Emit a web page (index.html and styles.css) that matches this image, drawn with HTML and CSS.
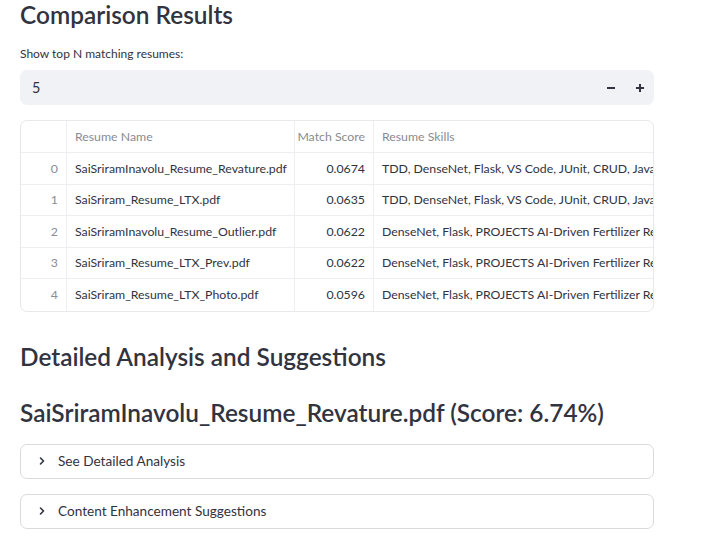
FILE: index.html
```html
<!DOCTYPE html>
<html lang="en">
<head>
<meta charset="utf-8">
<title>Comparison Results</title>
<link rel="stylesheet" href="styles.css">
</head>
<body>
<main class="main">
  <h3 class="heading">Comparison Results</h3>
  <div class="label">Show top N matching resumes:</div>
  <div class="number-input">
    <span class="value">5</span>
    <div class="steppers">
      <button class="step" aria-label="decrement"><svg width="10" height="10" viewBox="0 0 10 10"><rect x="1" y="4" width="8" height="2" fill="#31333f"/></svg></button>
      <button class="step" aria-label="increment"><svg width="10" height="10" viewBox="0 0 10 10"><rect x="1" y="4" width="8" height="2" fill="#31333f"/><rect x="4" y="1" width="2" height="8" fill="#31333f"/></svg></button>
    </div>
  </div>

  <div class="table">
    <div class="row head">
      <div class="cell idx"></div>
      <div class="cell name">Resume Name</div>
      <div class="cell score">Match Score</div>
      <div class="cell skills">Resume Skills</div>
    </div>
    <div class="row">
      <div class="cell idx">0</div>
      <div class="cell name">SaiSriramInavolu_Resume_Revature.pdf</div>
      <div class="cell score">0.0674</div>
      <div class="cell skills">TDD, DenseNet, Flask, VS Code, JUnit, CRUD, Javalin, Python</div>
    </div>
    <div class="row">
      <div class="cell idx">1</div>
      <div class="cell name">SaiSriram_Resume_LTX.pdf</div>
      <div class="cell score">0.0635</div>
      <div class="cell skills">TDD, DenseNet, Flask, VS Code, JUnit, CRUD, Javalin, Python</div>
    </div>
    <div class="row">
      <div class="cell idx">2</div>
      <div class="cell name">SaiSriramInavolu_Resume_Outlier.pdf</div>
      <div class="cell score">0.0622</div>
      <div class="cell skills">DenseNet, Flask, PROJECTS AI-Driven Fertilizer Recommendation</div>
    </div>
    <div class="row">
      <div class="cell idx">3</div>
      <div class="cell name">SaiSriram_Resume_LTX_Prev.pdf</div>
      <div class="cell score">0.0622</div>
      <div class="cell skills">DenseNet, Flask, PROJECTS AI-Driven Fertilizer Recommendation</div>
    </div>
    <div class="row last">
      <div class="cell idx">4</div>
      <div class="cell name">SaiSriram_Resume_LTX_Photo.pdf</div>
      <div class="cell score">0.0596</div>
      <div class="cell skills">DenseNet, Flask, PROJECTS AI-Driven Fertilizer Recommendation</div>
    </div>
  </div>

  <h3 class="heading section">Detailed Analysis and Suggestions</h3>
  <h3 class="heading resume">SaiSriramInavolu_Resume_Revature.pdf (Score: 6.74%)</h3>

  <div class="expander">
    <svg class="chev" width="10" height="10" viewBox="0 0 10 10"><polyline points="3.5,2 6.5,5 3.5,8" fill="none" stroke="#31333f" stroke-width="1.6" stroke-linecap="round" stroke-linejoin="round"/></svg>
    <span>See Detailed Analysis</span>
  </div>
  <div class="expander">
    <svg class="chev" width="10" height="10" viewBox="0 0 10 10"><polyline points="3.5,2 6.5,5 3.5,8" fill="none" stroke="#31333f" stroke-width="1.6" stroke-linecap="round" stroke-linejoin="round"/></svg>
    <span>Content Enhancement Suggestions</span>
  </div>
</main>
</body>
</html>
```

FILE: styles.css
```css
* { box-sizing: border-box; }

html, body {
  margin: 0;
  padding: 0;
  background: #ffffff;
}

body {
  font-family: Lato, "Noto Sans", sans-serif;
  color: #31333f;
}

.main {
  width: 634px;
  margin-left: 20px;
  display: flex;
  flex-direction: column;
}

.heading {
  margin: 0;
  font-size: 24.4px;
  line-height: 30px;
  font-weight: 600;
  color: #31333f;
}

.label {
  margin-top: 14px;
  font-size: 12px;
  line-height: 19px;
  margin-bottom: 7px;
}

.number-input {
  height: 35px;
  background: #f0f2f6;
  border-radius: 7px;
  display: flex;
  align-items: center;
  justify-content: space-between;
  padding-left: 12px;
}

.value {
  font-size: 14.4px;
}

.steppers {
  display: flex;
  height: 100%;
}

.step {
  width: 29px;
  height: 100%;
  border: 0;
  background: transparent;
  padding: 0;
  display: flex;
  align-items: center;
  justify-content: center;
}

.table {
  margin-top: 15px;
  border: 1px solid #e6e8ec;
  border-radius: 7px;
  overflow: hidden;
  font-size: 12.3px;
}

.row {
  display: grid;
  grid-template-columns: 46px 228px 79px 1fr;
  height: 31.5px;
  border-bottom: 1px solid #eceef1;
}

.row.head {
  height: 32px;
}

.row.last {
  border-bottom: 0;
}

.cell {
  padding: 0 8px;
  display: flex;
  align-items: center;
  white-space: nowrap;
  overflow: hidden;
  border-right: 1px solid #eceef1;
}

.cell.skills {
  border-right: 0;
}

.head .cell {
  color: #898b92;
}

.cell.idx {
  justify-content: flex-end;
  color: #8a8c93;
}

.cell.score {
  justify-content: flex-end;
}

.heading.section {
  margin-top: 30px;
}

.heading.resume {
  margin-top: 26px;
}

.expander {
  margin-top: 16px;
  height: 35px;
  border: 1px solid #d9dade;
  border-radius: 7px;
  display: flex;
  align-items: center;
  padding-left: 16px;
  font-size: 13.6px;
  gap: 11px;
}

.expander + .expander {
  margin-top: 15px;
}

.chev {
  flex: none;
}
```
